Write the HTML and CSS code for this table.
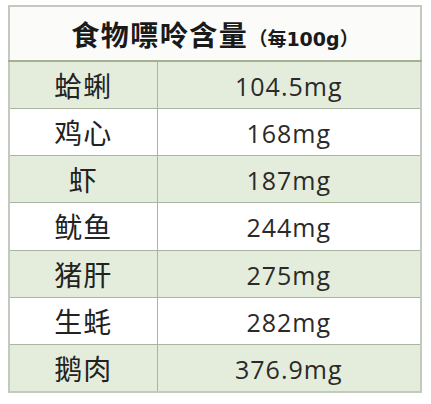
FILE: index.html
```html
<!DOCTYPE html>
<html lang="zh">
<head>
<meta charset="utf-8">
<title>食物嘌呤含量</title>
<link rel="stylesheet" href="styles.css">
</head>
<body>
<table class="purine">
  <colgroup>
    <col class="col-name">
    <col class="col-val">
  </colgroup>
  <thead>
    <tr>
      <th colspan="2" class="title"><span class="main">食物嘌呤含量</span><span class="unit">（每100g）</span></th>
    </tr>
  </thead>
  <tbody>
    <tr class="odd"><td class="name">蛤蜊</td><td class="val">104.5mg</td></tr>
    <tr class="even"><td class="name">鸡心</td><td class="val">168mg</td></tr>
    <tr class="odd"><td class="name">虾</td><td class="val">187mg</td></tr>
    <tr class="even"><td class="name">鱿鱼</td><td class="val">244mg</td></tr>
    <tr class="odd"><td class="name">猪肝</td><td class="val">275mg</td></tr>
    <tr class="even"><td class="name">生蚝</td><td class="val">282mg</td></tr>
    <tr class="odd"><td class="name">鹅肉</td><td class="val">376.9mg</td></tr>
  </tbody>
</table>
</body>
</html>
```

FILE: styles.css
```css
html, body {
  margin: 0;
  padding: 0;
  background: #ffffff;
}

.purine {
  margin: 5px 0 0 8px;
  width: 414px;
  height: 388px;
  border-collapse: collapse;
  table-layout: fixed;
  border: 2px solid #c4c9bf;
  font-family: "Open Sans", "Noto Sans CJK SC", sans-serif;
  color: #262626;
}

.col-name {
  width: 148px;
}

.title {
  height: 53px;
  padding: 0;
  background: #fbfcfa;
  border-bottom: 2px solid #a3b092;
  text-align: center;
  vertical-align: middle;
  color: #1a1a1a;
  font-weight: bold;
  white-space: nowrap;
}

.title .main {
  font-family: "Noto Sans CJK SC", sans-serif;
  font-size: 28px;
  letter-spacing: 1.5px;
}

.title .unit {
  font-family: "DejaVu Sans", "Noto Sans CJK SC", sans-serif;
  font-size: 19px;
}

td {
  padding: 0;
  text-align: center;
  vertical-align: middle;
  border: 1px solid #a9b59f;
}

.name {
  font-family: "Noto Sans CJK SC", sans-serif;
  font-size: 28px;
  letter-spacing: 1px;
  color: #222222;
}

.val {
  font-family: "Open Sans", sans-serif;
  font-size: 25px;
  letter-spacing: 1px;
  padding-top: 2px;
  color: #2a2a2a;
}

.odd td {
  background: #e4eddb;
}

.even td {
  background: #ffffff;
}
```
